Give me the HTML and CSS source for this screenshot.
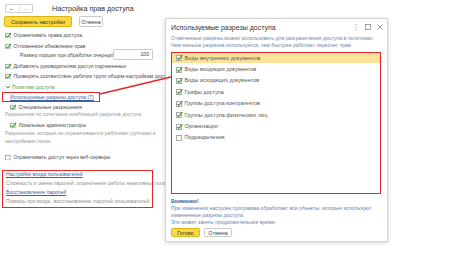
FILE: index.html
```html
<!DOCTYPE html>
<html lang="ru">
<head>
<meta charset="utf-8">
<title>Настройка прав доступа</title>
<link rel="stylesheet" href="styles.css">
</head>
<body>
<div class="page">
  <div class="main">
    <div class="head">
      <div class="nav"><span class="nav-b">&#8592;</span><span class="nav-b dim">&#8594;</span></div>
      <div class="title">Настройка прав доступа</div>
    </div>
    <div class="toolbar">
      <div class="btn primary save">Сохранить настройки</div>
      <div class="btn cancel">Отмена</div>
    </div>
    <div class="row r-cb1"><svg class="cb" viewBox="0 0 7 7"><rect x="0.5" y="1.5" width="5" height="5" fill="#fff" stroke="#a8a8a8"/><path d="M1.4 4 L2.9 5.4 L6.4 1" fill="none" stroke="#3a9a3a" stroke-width="1.2"/></svg>Ограничивать права доступа</div>
    <div class="row r-cb2"><svg class="cb" viewBox="0 0 7 7"><rect x="0.5" y="1.5" width="5" height="5" fill="#fff" stroke="#a8a8a8"/><path d="M1.4 4 L2.9 5.4 L6.4 1" fill="none" stroke="#3a9a3a" stroke-width="1.2"/></svg>Отложенное обновление прав</div>
    <div class="row r-portion"><span class="portion-label">Размер порции при обработке очереди</span><span class="num">100</span></div>
    <div class="row r-cb3"><svg class="cb" viewBox="0 0 7 7"><rect x="0.5" y="1.5" width="5" height="5" fill="#fff" stroke="#a8a8a8"/><path d="M1.4 4 L2.9 5.4 L6.4 1" fill="none" stroke="#3a9a3a" stroke-width="1.2"/></svg>Добавлять руководителям доступ подчиненных</div>
    <div class="row r-cb4"><svg class="cb" viewBox="0 0 7 7"><rect x="0.5" y="1.5" width="5" height="5" fill="#fff" stroke="#a8a8a8"/><path d="M1.4 4 L2.9 5.4 L6.4 1" fill="none" stroke="#3a9a3a" stroke-width="1.2"/></svg>Проверять соответствие рабочих групп общим настройкам доступа</div>
    <div class="row r-pol"><svg class="chev" viewBox="0 0 6 6"><path d="M1 2 L3 4 L5 2" fill="none" stroke="#4a9a46" stroke-width="1"/></svg><span class="green">Политики доступа</span></div>
    <div class="row r-link mark"><span class="link">Используемые разрезы доступа (7)</span></div>
    <div class="row r-spec"><svg class="cb" viewBox="0 0 7 7"><rect x="0.5" y="1.5" width="5" height="5" fill="#fff" stroke="#a8a8a8"/><path d="M1.4 4 L2.9 5.4 L6.4 1" fill="none" stroke="#3a9a3a" stroke-width="1.2"/></svg>Специальные разрешения</div>
    <div class="hint h1">Разрешения по сочетанию комбинаций разрезов доступа</div>
    <div class="row r-local"><svg class="cb" viewBox="0 0 7 7"><rect x="0.5" y="1.5" width="5" height="5" fill="#fff" stroke="#a8a8a8"/><path d="M1.4 4 L2.9 5.4 L6.4 1" fill="none" stroke="#3a9a3a" stroke-width="1.2"/></svg>Локальные администраторы</div>
    <div class="hint h2">Разрешения, которые не ограничиваются рабочими группами и<br>настройками папок.</div>
    <div class="row r-web"><svg class="cb" viewBox="0 0 7 7"><rect x="0.5" y="1.5" width="5" height="5" fill="#fff" stroke="#a8a8a8"/></svg>Ограничивать доступ через веб-серверы</div>
    <div class="logbox mark">
      <div class="lb-link"><span class="link">Настройки входа пользователей</span></div>
      <div class="lb-hint">Сложность и смена паролей, ограничение работы неактивных пользователей</div>
      <div class="lb-link"><span class="link">Восстановление паролей</span></div>
      <div class="lb-hint last">Помощь при входе, восстановление паролей пользователей</div>
    </div>
  </div>

  <div class="dialog">
    <div class="dlg-head">
      <div class="dlg-title">Используемые разрезы доступа</div>
      <div class="dlg-ctrls">
        <svg class="ctl" viewBox="0 0 8 8"><circle cx="4" cy="1.5" r="0.6" fill="#888"/><circle cx="4" cy="4" r="0.6" fill="#888"/><circle cx="4" cy="6.5" r="0.6" fill="#888"/></svg>
        <svg class="ctl" viewBox="0 0 8 8"><rect x="1.5" y="1.5" width="5" height="5" fill="none" stroke="#888" stroke-width="0.8"/></svg>
        <svg class="ctl" viewBox="0 0 8 8"><path d="M1.5 1.5 L6.5 6.5 M6.5 1.5 L1.5 6.5" stroke="#888" stroke-width="0.8"/></svg>
      </div>
    </div>
    <div class="dlg-desc">Отмеченные разрезы можно использовать для разграничения доступа в политиках.<br>Чем меньше разрезов используется, тем быстрее работает пересчет прав</div>
    <div class="dlg-list mark">
      <div class="item sel"><svg class="cb2" viewBox="0 0 7 7"><rect x="0.5" y="1.5" width="5" height="5" fill="#fff" stroke="#a8a8a8"/><path d="M1.4 4 L2.9 5.4 L6.4 1" fill="none" stroke="#3a9a3a" stroke-width="1.2"/></svg>Виды внутренних документов</div>
      <div class="item"><svg class="cb2" viewBox="0 0 7 7"><rect x="0.5" y="1.5" width="5" height="5" fill="#fff" stroke="#a8a8a8"/><path d="M1.4 4 L2.9 5.4 L6.4 1" fill="none" stroke="#3a9a3a" stroke-width="1.2"/></svg>Виды входящих документов</div>
      <div class="item"><svg class="cb2" viewBox="0 0 7 7"><rect x="0.5" y="1.5" width="5" height="5" fill="#fff" stroke="#a8a8a8"/><path d="M1.4 4 L2.9 5.4 L6.4 1" fill="none" stroke="#3a9a3a" stroke-width="1.2"/></svg>Виды исходящих документов</div>
      <div class="item"><svg class="cb2" viewBox="0 0 7 7"><rect x="0.5" y="1.5" width="5" height="5" fill="#fff" stroke="#a8a8a8"/><path d="M1.4 4 L2.9 5.4 L6.4 1" fill="none" stroke="#3a9a3a" stroke-width="1.2"/></svg>Грифы доступа</div>
      <div class="item"><svg class="cb2" viewBox="0 0 7 7"><rect x="0.5" y="1.5" width="5" height="5" fill="#fff" stroke="#a8a8a8"/><path d="M1.4 4 L2.9 5.4 L6.4 1" fill="none" stroke="#3a9a3a" stroke-width="1.2"/></svg>Группы доступа контрагентов</div>
      <div class="item"><svg class="cb2" viewBox="0 0 7 7"><rect x="0.5" y="1.5" width="5" height="5" fill="#fff" stroke="#a8a8a8"/><path d="M1.4 4 L2.9 5.4 L6.4 1" fill="none" stroke="#3a9a3a" stroke-width="1.2"/></svg>Группы доступа физических лиц</div>
      <div class="item"><svg class="cb2" viewBox="0 0 7 7"><rect x="0.5" y="1.5" width="5" height="5" fill="#fff" stroke="#a8a8a8"/><path d="M1.4 4 L2.9 5.4 L6.4 1" fill="none" stroke="#3a9a3a" stroke-width="1.2"/></svg>Организации</div>
      <div class="item"><svg class="cb2" viewBox="0 0 7 7"><rect x="0.5" y="1.5" width="5" height="5" fill="#fff" stroke="#a8a8a8"/></svg>Подразделения</div>
    </div>
    <div class="dlg-note">
      <div class="note-title">Внимание!</div>
      <div>При изменении настроек программа обработает все объекты, которые используют</div>
      <div>измененные разрезы доступа.</div>
      <div>Это может занять продолжительное время.</div>
    </div>
    <div class="dlg-btns">
      <div class="btn primary done">Готово</div>
      <div class="btn dcancel">Отмена</div>
    </div>
  </div>

  <svg class="connector" viewBox="0 0 474 256"><line x1="100" y1="94" x2="171" y2="77" stroke="#e3262c" stroke-width="1.6"/></svg>
</div>
</body>
</html>
```

FILE: styles.css
```css
* { box-sizing: border-box; }
html, body { margin: 0; padding: 0; background: #fff; }
body { font-family: "Liberation Sans", Arial, sans-serif; color: #4a4a4a; }

.page { position: relative; width: 474px; height: 256px; overflow: hidden; background: #fff; }

.main { padding-left: 5px; white-space: nowrap; font-size: 5.1px; }

.head { height: 16px; display: flex; align-items: center; }
.nav { width: 28px; height: 9px; border: 1px solid #cfcfcf; display: flex; border-radius: 1px; background: #fff; }
.nav-b { flex: 1; display: flex; align-items: center; justify-content: center; font-size: 7px; line-height: 7px; color: #444; }
.nav-b.dim { color: #aaa; border-left: 1px solid #e2e2e2; }
.title { margin-left: 19px; font-size: 7.2px; color: #333; }

.toolbar { height: 11px; display: flex; gap: 7px; margin-left: -1px; }
.btn { height: 100%; display: flex; align-items: center; justify-content: center; border: 1px solid #c9c9c9; border-radius: 1.5px; background: #fff; color: #444; font-size: 5.4px; }
.btn.primary { background: #fbd843; border-color: #dcb615; color: #333; }
.save { width: 68px; }
.cancel { width: 24px; }

.row { height: 10px; line-height: 10px; display: flex; align-items: center; }
.cb { width: 6.5px; height: 6.5px; margin-right: 2px; flex: none; }
.r-cb1 { margin-top: 3px; }
.r-cb2 { margin-top: 1px; }
.r-portion { margin-top: -2px; height: 11px; padding-left: 15px; }
.portion-label { width: 93px; }
.num { width: 40px; height: 11px; border: 1px solid #cdcdcd; border-radius: 1px; text-align: right; padding-right: 3px; line-height: 9px; color: #444; }
.r-cb3 { margin-top: 1px; }
.r-pol { margin-top: 1px; }
.chev { width: 6px; height: 6px; margin-right: 1px; }
.green { color: #4a9a46; }
.r-link { margin-left: -3px; width: 98px; padding-left: 8px; }
.link { color: #3a62a8; text-decoration: underline; }
.r-spec { padding-left: 5px; }
.hint { color: #9a9a9a; line-height: 8px; }
.h1 { margin-top: -2px; height: 8px; }
.r-local { margin-top: 2px; padding-left: 5px; }
.h2 { margin-top: -1px; }
.r-web { margin-top: 7px; }

.mark { outline: 1.6px solid #e3262c; outline-offset: -1.6px; }

.logbox { margin-top: 8px; margin-left: -3px; width: 151px; padding: 0 0 3px 3px; }
.logbox.mark { border-left: 1.5px solid #e3262c; }
.lb-link { line-height: 9px; height: 9px; }
.lb-hint { line-height: 9px; height: 9px; color: #8f8f8f; }
.lb-hint.last { line-height: 8px; height: 8px; }

.dialog { position: absolute; left: 165px; top: 18px; width: 223px; height: 224px; background: #fff; border: 1px solid #d3d3d3; box-shadow: 0 1px 4px rgba(0,0,0,0.18); padding: 0 6px 0 5px; white-space: nowrap; }
.dlg-head { height: 16px; display: flex; align-items: center; }
.dlg-title { font-size: 7px; color: #333; }
.dlg-ctrls { margin-left: auto; margin-right: -3px; display: flex; gap: 4px; }
.ctl { width: 8px; height: 8px; }
.dlg-desc { font-size: 5.2px; line-height: 7px; color: #7388a8; }
.dlg-list { margin-top: 3px; width: 210px; height: 142px; }
.item { height: 11.4px; display: flex; align-items: center; padding-left: 5px; font-size: 5.5px; color: #555; }
.item.sel { background: #fde39a; }
.cb2 { width: 7px; height: 7px; margin-right: 1.5px; flex: none; }
.dlg-note { margin-top: 3.5px; font-size: 5.2px; line-height: 7px; color: #6a84ad; }
.note-title { font-weight: bold; color: #3f5f95; }
.dlg-btns { margin-top: 2.5px; height: 9px; display: flex; gap: 4px; }
.done { width: 29px; }
.dcancel { width: 28px; }

.connector { position: absolute; left: 0; top: 0; width: 474px; height: 256px; pointer-events: none; }
```
